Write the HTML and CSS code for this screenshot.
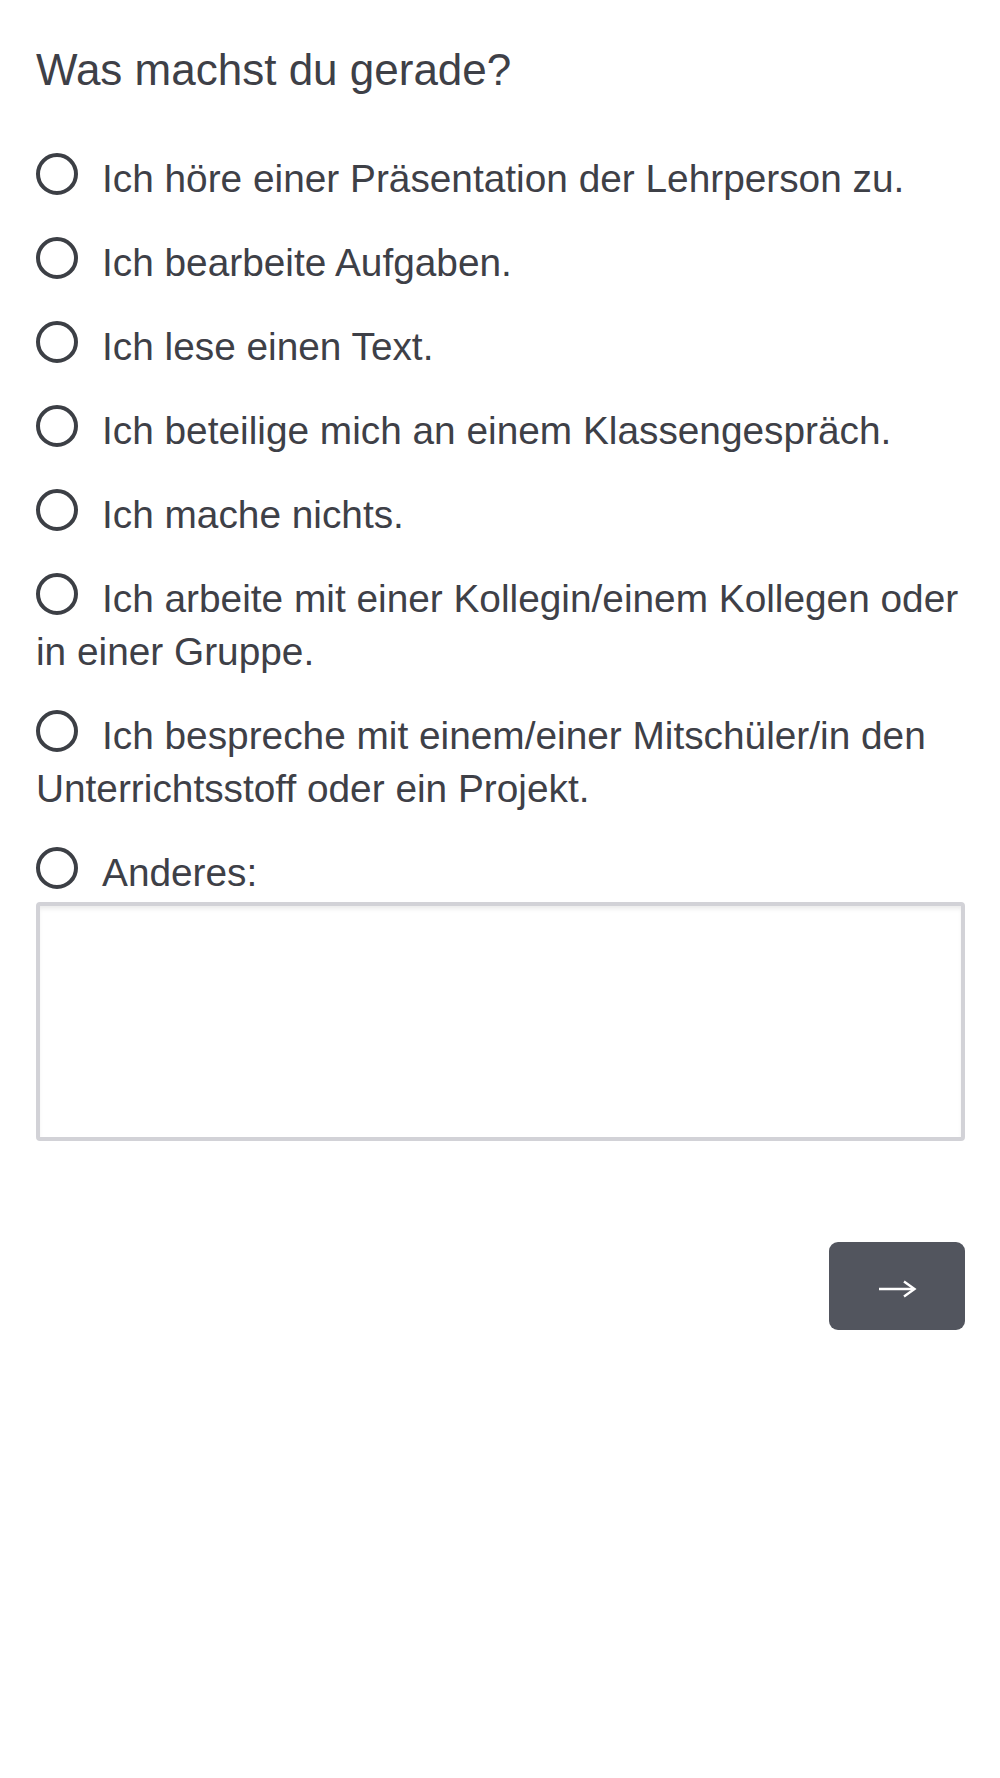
FILE: index.html
```html
<!DOCTYPE html>
<html lang="de">
<head>
<meta charset="utf-8">
<title>Was machst du gerade?</title>
<link rel="stylesheet" href="styles.css">
</head>
<body>
<main class="page">
  <h1 class="question">Was machst du gerade?</h1>
  <form class="options">
    <label class="option"><span class="radio"></span>Ich höre einer Präsentation der Lehrperson zu.</label>
    <label class="option"><span class="radio"></span>Ich bearbeite Aufgaben.</label>
    <label class="option"><span class="radio"></span>Ich lese einen Text.</label>
    <label class="option"><span class="radio"></span>Ich beteilige mich an einem Klassengespräch.</label>
    <label class="option"><span class="radio"></span>Ich mache nichts.</label>
    <label class="option"><span class="radio"></span>Ich arbeite mit einer Kollegin/einem Kollegen oder in einer Gruppe.</label>
    <label class="option"><span class="radio"></span>Ich bespreche mit einem/einer Mitschüler/in den Unterrichtsstoff oder ein Projekt.</label>
    <div class="other">
      <label class="option"><span class="radio"></span>Anderes:</label>
      <div class="textarea"></div>
    </div>
    <div class="actions">
      <button type="button" class="next" aria-label="Weiter">
        <svg class="arrow" width="40" height="20" viewBox="0 0 40 20" aria-hidden="true">
          <path d="M2 10 H36" stroke="#ffffff" stroke-width="2.6" fill="none"/>
          <path d="M27 2.5 L37.5 10 L27 17.5" stroke="#ffffff" stroke-width="2.4" fill="none" stroke-linejoin="miter"/>
        </svg>
      </button>
    </div>
  </form>
</main>
</body>
</html>
```
FILE: styles.css
```css
html, body {
  margin: 0;
  padding: 0;
  background: #ffffff;
}

body {
  font-family: "Liberation Sans", Arial, Helvetica, sans-serif;
  color: #3e4047;
}

.page {
  padding: 45px 35px 0 36px;
}

.question {
  margin: 0;
  font-size: 44px;
  font-weight: normal;
  line-height: 50px;
}

.options {
  display: flex;
  flex-direction: column;
  gap: 31px;
  margin-top: 57px;
}

.option {
  display: block;
  font-size: 38.8px;
  line-height: 53px;
}

.radio {
  display: inline-block;
  box-sizing: border-box;
  width: 42px;
  height: 42px;
  border: 4px solid #3c3f45;
  border-radius: 50%;
  vertical-align: -3px;
  margin-right: 24px;
}

.other {
  display: flex;
  flex-direction: column;
}

.textarea {
  box-sizing: border-box;
  margin-top: 3px;
  height: 239px;
  border: 4px solid #d2d2d7;
  border-radius: 4px;
  box-shadow: inset 0 4px 4px -1px rgba(0, 0, 0, 0.08);
  background: #ffffff;
}

.actions {
  display: flex;
  justify-content: flex-end;
  margin-top: 70px;
}

.next {
  display: flex;
  align-items: center;
  justify-content: center;
  width: 136px;
  height: 88px;
  border: none;
  border-radius: 9px;
  background: #52555e;
  padding: 5px 0 0 0;
  margin: 0;
}

.arrow {
  display: block;
}
```
